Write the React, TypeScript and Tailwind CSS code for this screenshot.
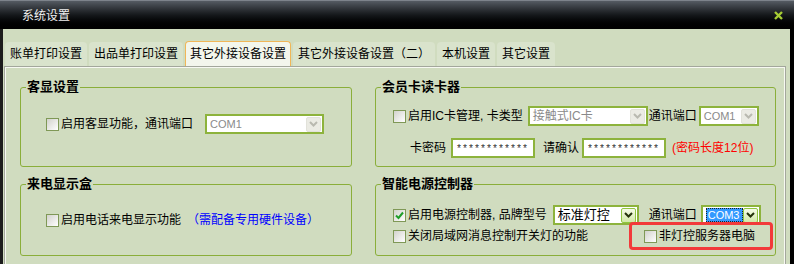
import type { ReactNode } from "react";

const tabs = ["账单打印设置", "出品单打印设置", "其它外接设备设置", "其它外接设备设置（二）", "本机设置", "其它设置"];

const Check = ({ checked = false }: { checked?: boolean }) => (
  <span className="w-[13px] h-[13px] shrink-0 border border-[#7f9856] bg-linear-to-br from-[#d2d2cc] to-white flex items-center justify-center">
    {checked && (
      <svg width="9" height="9" viewBox="0 0 9 9">
        <path d="M1 4.5 L3.5 7 L8 1.5" stroke="#1f9e2a" strokeWidth="2" fill="none" />
      </svg>
    )}
  </span>
);

const Arrow = ({ active = false }: { active?: boolean }) => (
  <span
    className={
      active
        ? "w-[15px] h-[15px] shrink-0 rounded-[2px] border border-[#8fc63e] bg-linear-to-b from-[#f6fbe8] to-[#d2e8a8] flex items-center justify-center"
        : "w-[15px] h-[15px] shrink-0 rounded-[2px] border border-[#e2e2da] bg-[#ebebe4] flex items-center justify-center"
    }
  >
    <svg width="9" height="6" viewBox="0 0 9 6">
      <path d="M1 1 L4.5 4.5 L8 1" stroke={active ? "#26330c" : "#b9b9b0"} strokeWidth="2" fill="none" />
    </svg>
  </span>
);

const Combo = ({ width, children, active = false }: { width: string; children: ReactNode; active?: boolean }) => (
  <div className={`${width} h-[20px] shrink-0 border-2 border-[#8db33c] bg-white flex items-center justify-between pl-[3px] pr-[1px]`}>
    <div className="flex-1 min-w-0 flex items-center">{children}</div>
    <Arrow active={active} />
  </div>
);

const Pwd = () => (
  <div className="w-[84px] h-[20px] shrink-0 border-2 border-[#8db33c] bg-white flex items-center pl-[3px] font-['Liberation_Mono',monospace] text-[10px] text-[#333] leading-none pt-[3px]">
    ************
  </div>
);

const Group = ({ title, height, children }: { title: string; height: string; children: ReactNode }) => (
  <fieldset className={`${height} border border-[#8aae3a] rounded-[3px]`}>
    <legend className="ml-[5px] px-[1px] text-[13px] leading-[16px] font-bold text-black">{title}</legend>
    {children}
  </fieldset>
);

export default function App() {
  return (
    <div className="w-[794px] h-[264px] overflow-hidden flex flex-col bg-[#d0dcbf] font-['Liberation_Sans','Noto_Sans_CJK_SC',sans-serif] text-[12px] leading-[14px] text-black">
      {/* title bar */}
      <div className="h-[29px] shrink-0 border-t border-[#7d838b] bg-linear-to-b from-[#555b63] via-[#15181b] to-black flex items-center justify-between pl-[22px] pr-[11px]">
        <span className="text-[12px] text-[#f0f0f0] font-['Noto_Sans_CJK_SC',sans-serif]">系统设置</span>
        <svg width="9" height="9" viewBox="0 0 9 9">
          <path d="M1 1 L8 8 M8 1 L1 8" stroke="#a6cc34" strokeWidth="2.4" />
        </svg>
      </div>

      <div className="flex-1 flex min-h-0">
        <div className="w-[3px] bg-[#1c1c1c]" />
        <div className="flex-1 flex flex-col pt-[13px]">
          {/* tabs */}
          <div className="flex items-end gap-[2px] pl-[2px] h-[24px]">
            {tabs.map((t, i) =>
              i === 2 ? (
                <div key={t} className="h-[25px] px-[4px] flex items-center bg-[#f3f6ec] border border-b-0 border-[#f0b658] rounded-t-[4px]">
                  {t}
                </div>
              ) : (
                <div key={t} className="h-[24px] px-[5px] flex items-center bg-[#d9e3cc] rounded-t-[4px]">
                  {t}
                </div>
              )
            )}
          </div>

          {/* panel */}
          <div className="flex-1 ml-[1px] mr-[4px] border-t border-l border-r border-[#a3a79c] shadow-[inset_1px_1px_0_#f7f9f2,inset_-1px_0_0_#f7f9f2] pt-[12px] pl-[15px]">
            <div className="grid grid-cols-[332px_401px] gap-x-[23px] gap-y-[9px]">
              <Group title="客显设置" height="h-[88px]">
                <div className="flex items-center pl-[25px] mt-[19px]">
                  <Check />
                  <span className="ml-[2px]">启用客显功能，通讯端口</span>
                  <div className="ml-[12px]">
                    <Combo width="w-[119px]">
                      <span className="text-[11px] text-[#8a8a8a]">COM1</span>
                    </Combo>
                  </div>
                </div>
              </Group>

              <Group title="会员卡读卡器" height="h-[88px]">
                <div className="flex items-center pl-[17px] mt-[11px]">
                  <Check />
                  <span className="ml-[2px]">启用IC卡管理, 卡类型</span>
                  <div className="ml-[5px]">
                    <Combo width="w-[120px]">
                      <span className="text-[#8a8a8a]">接触式IC卡</span>
                    </Combo>
                  </div>
                  <span className="ml-[1px]">通讯端口</span>
                  <div className="ml-[2px]">
                    <Combo width="w-[60px]">
                      <span className="text-[11px] text-[#8a8a8a]">COM1</span>
                    </Combo>
                  </div>
                </div>
                <div className="flex items-center pl-[34px] mt-[12px]">
                  <span>卡密码</span>
                  <div className="ml-[5px]">
                    <Pwd />
                  </div>
                  <span className="ml-[8px]">请确认</span>
                  <div className="ml-[3px]">
                    <Pwd />
                  </div>
                  <span className="ml-[6px] text-[#ff0000]">(密码长度12位)</span>
                </div>
              </Group>

              <Group title="来电显示盒" height="h-[80px]">
                <div className="flex items-center h-[20px] pl-[25px] mt-[18px]">
                  <Check />
                  <span className="ml-[2px]">启用电话来电显示功能</span>
                  <span className="ml-[6px] text-[#0000ff]">（需配备专用硬件设备）</span>
                </div>
              </Group>

              <Group title="智能电源控制器" height="h-[80px]">
                <div className="flex items-center pl-[17px] mt-[13px]">
                  <Check checked />
                  <span className="ml-[2px]">启用电源控制器, 品牌型号</span>
                  <div className="ml-[6px]">
                    <Combo width="w-[86px]" active>
                      <span className="text-[13px]">标准灯控</span>
                    </Combo>
                  </div>
                  <span className="ml-[10px]">通讯端口</span>
                  <div className="ml-[4px]">
                    <Combo width="w-[60px]" active>
                      <span className="h-[14px] w-[38px] bg-[#3399ff] text-white text-[11px] leading-[12px] border border-dotted border-[#222] pl-[1px]">COM3</span>
                    </Combo>
                  </div>
                </div>
                <div className="flex items-center justify-between pl-[17px] pr-[2px] -mt-[3px]">
                  <div className="flex items-center">
                    <Check />
                    <span className="ml-[2px]">关闭局域网消息控制开关灯的功能</span>
                  </div>
                  <div className="w-[144px] h-[28px] border-[3px] border-[#f23a3a] rounded-[4px] flex items-center pl-[12px]">
                    <Check />
                    <span className="ml-[2px]">非灯控服务器电脑</span>
                  </div>
                </div>
              </Group>
            </div>
          </div>
        </div>
        <div className="w-[4px] bg-black" />
      </div>
    </div>
  );
}
